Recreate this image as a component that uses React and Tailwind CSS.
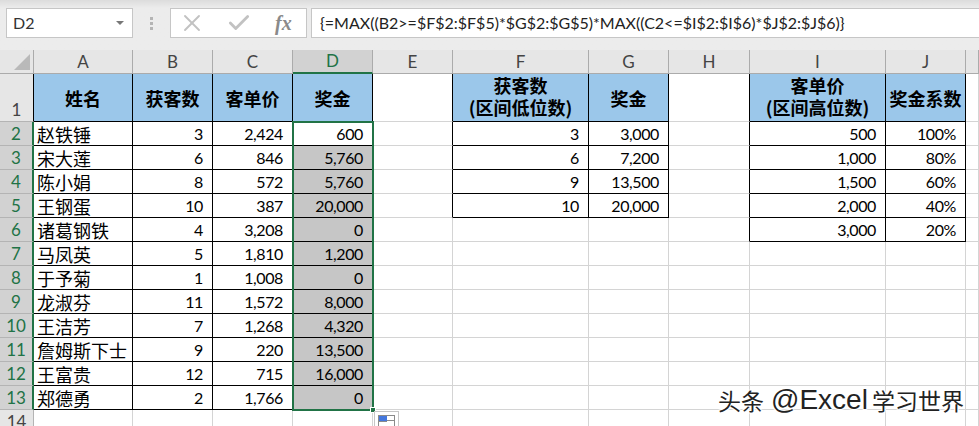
import { X, Check } from 'lucide-react';

const COLS = ['A', 'B', 'C', 'D', 'E', 'F', 'G', 'H', 'I', 'J', ''];

const CJK = '[font-family:"Noto_Sans_CJK_SC",sans-serif]';

// main sheet: column -> row number -> value
const cells = {
  A: ['姓名', '赵铁锤', '宋大莲', '陈小娟', '王钢蛋', '诸葛钢铁', '马凤英', '于予菊', '龙淑芬', '王洁芳', '詹姆斯下士', '王富贵', '郑德勇'],
  B: ['获客数', '3', '6', '8', '10', '4', '5', '1', '11', '7', '9', '12', '2'],
  C: ['客单价', '2,424', '846', '572', '387', '3,208', '1,810', '1,008', '1,572', '1,268', '220', '715', '1,766'],
  D: ['奖金', '600', '5,760', '5,760', '20,000', '0', '1,200', '0', '8,000', '4,320', '13,500', '16,000', '0'],
  F: [['获客数', '(区间低位数)'], '3', '6', '9', '10'],
  G: ['奖金', '3,000', '7,200', '13,500', '20,000'],
  I: [['客单价', '(区间高位数)'], '500', '1,000', '1,500', '2,000', '3,000'],
  J: ['奖金系数', '100%', '80%', '60%', '40%', '20%'],
};

const FORMULA = '{=MAX((B2>=$F$2:$F$5)*$G$2:$G$5)*MAX((C2<=$I$2:$I$6)*$J$2:$J$6)}';

const inTable = (col, row) => cells[col] !== undefined && row <= cells[col].length;

const Cell = ({ col, nextCol, row }) => {
  const value = inTable(col, row) ? cells[col][row - 1] : null;
  const blackRight = inTable(col, row) || inTable(nextCol, row);
  const blackBottom = inTable(col, row);
  const grey = col === 'D' && row >= 3 && row <= 13;
  const header = row === 1 && value !== null;

  return (
    <div
      className={`flex items-center border-r border-b whitespace-nowrap ${
        blackRight ? 'border-r-black' : 'border-r-[#d4d4d4]'
      } ${blackBottom ? 'border-b-black' : 'border-b-[#d4d4d4]'} ${
        header ? 'bg-[#9bc7ea]' : grey ? 'bg-[#c6c6c6]' : 'bg-white'
      } ${
        header
          ? `flex-col justify-center text-center text-[18px] leading-[22px] font-bold ${CJK}`
          : col === 'A'
            ? `pl-[3px] text-[18px] leading-[22px] ${CJK}`
            : 'justify-end pr-[9px] text-[16px] leading-[22px] tracking-[-0.4px]'
      } ${Array.isArray(value) ? 'pb-[3px]' : ''} text-black`}
    >
      {Array.isArray(value)
        ? value.map((line) => (
            <span key={line} className="block h-[22px]">
              {line}
            </span>
          ))
        : value}
    </div>
  );
};

const RowHeader = ({ row }) => {
  const selected = row >= 2 && row <= 13;
  return (
    <div
      className={`flex justify-center border-r border-b text-[17px] leading-[23px] ${
        row === 1 ? 'items-end' : 'items-center'
      } ${
        selected
          ? 'border-r-2 border-r-[#217346] border-b-[#b4b4b4] bg-[#d2d2d2] text-[#217346]'
          : 'border-b-[#b4b4b4] bg-[#e6e6e6] text-[#444444]'
      } ${row === 14 ? 'border-r-[#b4b4b4]' : ''} ${row === 1 ? 'border-r-black' : ''}`}
    >
      {row}
    </div>
  );
};

export default function App() {
  const rows = Array.from({ length: 14 }, (_, i) => i + 1);

  return (
    <div className='relative h-[426px] w-[979px] overflow-hidden bg-[#e6e6e6] [font-family:"Lato",sans-serif] text-black'>
      {/* Name box + formula bar */}
      <div className="flex h-[50px] items-start gap-[4px] bg-gradient-to-b from-[#dcdcdc] from-0% to-[#ececec] to-[16%] pt-[8px] pl-[6px]">
        <div className="flex h-[30px] w-[127px] items-center justify-between border border-[#c6c6c6] bg-white pr-[8px] pl-[6px] text-[16px] text-[#333333]">
          <span>D2</span>
          <span className="h-0 w-0 border-x-[4px] border-t-[4px] border-x-transparent border-t-[#777777]" />
        </div>
        <div className="flex h-[30px] w-[29px] flex-col items-center justify-center gap-[2px]">
          <span className="size-[3px] bg-[#b4b4b4]" />
          <span className="size-[3px] bg-[#b4b4b4]" />
          <span className="size-[3px] bg-[#b4b4b4]" />
        </div>
        <div className="flex h-[30px] w-[137px] items-center border border-[#c6c6c6] bg-white pl-[7px]">
          <X size={28} strokeWidth={1.6} className="text-[#c2c2c2]" />
          <Check size={26} strokeWidth={2.6} className="ml-[20px] text-[#c2c2c2]" />
          <span className='ml-[23px] font-["Liberation_Serif"] text-[20px] font-bold text-[#8a8a8a] italic'>fx</span>
        </div>
        <div className="flex h-[30px] flex-1 items-center border border-r-0 border-[#c6c6c6] bg-white pl-[8px] text-[16px] text-[#222222]">
          {FORMULA}
        </div>
      </div>

      {/* Sheet */}
      <div className="grid grid-cols-[34px_99px_80px_80px_80px_80px_136px_80px_81px_136px_80px_1fr] grid-rows-[24px_48px_repeat(13,24px)]">
        <div className="flex items-end justify-end border-r border-b border-[#ababab] bg-[#e6e6e6] pr-[3px] pb-[3px]">
          <svg width="16" height="16" viewBox="0 0 16 16">
            <polygon points="0,16 16,16 16,0" fill="#b9b9b9" />
          </svg>
        </div>
        {COLS.map((col) => (
          <div
            key={col}
            className={`flex items-center justify-center border-r border-b text-[17px] ${
              col === 'D'
                ? 'border-r-[#ababab] border-b-2 border-b-[#217346] bg-[#d2d2d2] text-[#217346]'
                : 'border-r-[#ababab] border-b-[#ababab] bg-[#e6e6e6] text-[#444444]'
            }`}
          >
            {col}
          </div>
        ))}

        {rows.map((row) => [
          <RowHeader key={`h${row}`} row={row} />,
          ...COLS.map((col, i) => <Cell key={`${col}${row}`} col={col} nextCol={COLS[i + 1]} row={row} />),
        ])}
      </div>

      {/* Selection D2:D13 */}
      <div className="pointer-events-none absolute top-[121px] left-[292px] h-[290px] w-[82px] border-2 border-[#217346]" />
      <div className="absolute top-[407px] left-[370px] box-content size-[4px] border border-white bg-[#217346]" />

      {/* Quick analysis button */}
      <div className="absolute top-[411px] left-[374px] h-[24px] w-[25px] border border-[#c6c6c6] bg-white pt-[3px] pl-[3px]">
        <div className="grid h-[12px] w-[17px] grid-cols-2 grid-rows-2 border border-[#8a8a8a]">
          <span className="bg-[#4477dd]" />
          <span className="border-b border-[#8a8a8a]" />
          <span className="border-t border-[#8a8a8a]" />
          <span />
        </div>
      </div>

      {/* Watermark */}
      <div className={`absolute top-[380px] left-[718px] flex items-center text-[23px] leading-[40px] text-[#222222] [text-shadow:1px_1px_1px_#ffffff,-1px_-1px_1px_#ffffff,1px_-1px_1px_#ffffff,-1px_1px_1px_#ffffff] ${CJK}`}>
        <span>头条</span>
        <span className='ml-[7px] mr-[4px] font-["Liberation_Sans"] text-[28px]'>@Excel</span>
        <span>学习世界</span>
      </div>
    </div>
  );
}
